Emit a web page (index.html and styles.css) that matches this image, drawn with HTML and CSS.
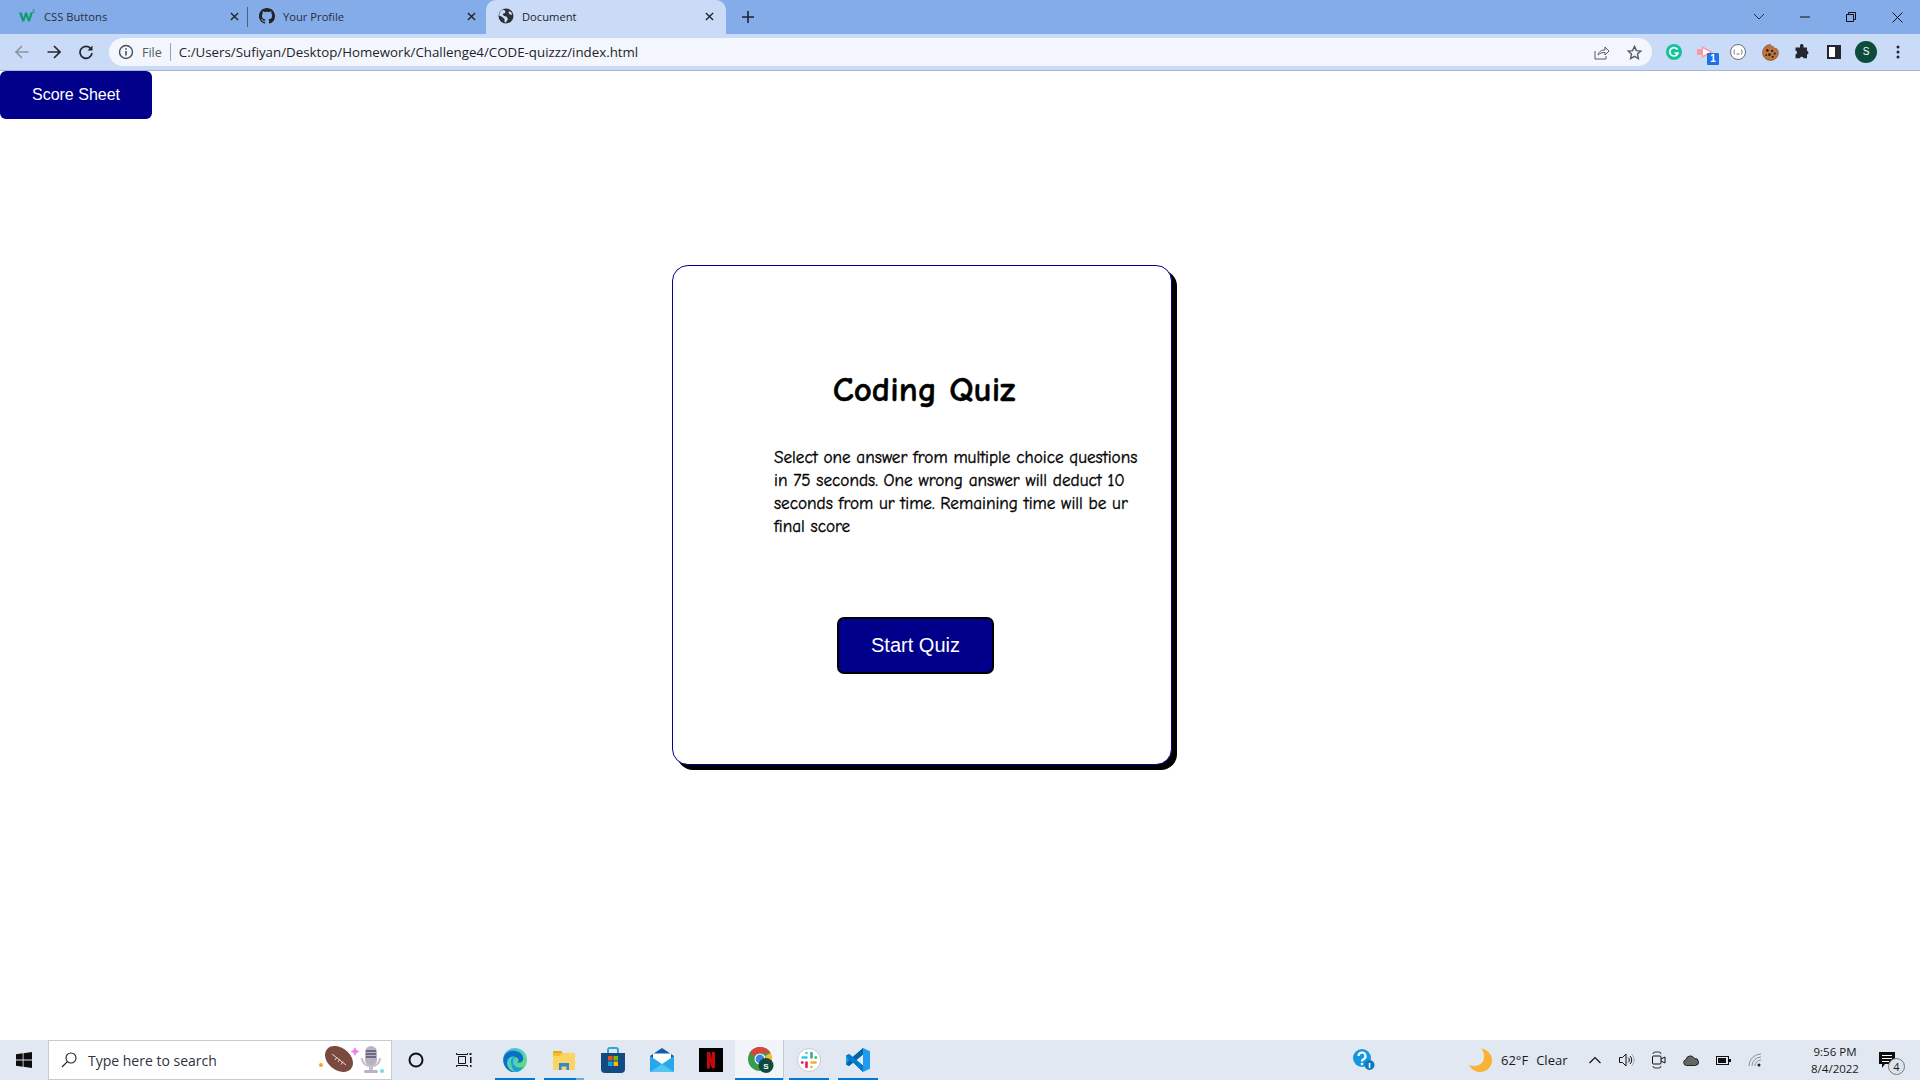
FILE: index.html
```html
<!DOCTYPE html>
<html lang="en">
<head>
<meta charset="utf-8">
<title>Document</title>
<link rel="stylesheet" href="styles.css">
</head>
<body>
<header class="browser">
  <div class="tabstrip">
    <div class="tab tab-first">
      <svg class="favicon" viewBox="0 0 16 16"><path d="M0 4.500h2.800l1.500 5.500 1.800-5.500h2l1.800 5.500 1.400-5.500h2.500L11 13.500H9L7.100 8.300 5.200 13.500H3.200z" fill="#0c9f6c"/><path d="M13.200 1.500h2.300v.6l-.9.8c.7.200.9.600.9 1 0 .7-.6 1-1.300 1l-1-.2v-.6l.9.200c.4 0 .6-.1.600-.4s-.3-.4-.9-.4v-.5l.9-.8h-1.500z" fill="#0c9f6c"/></svg>
      <span class="tab-title">CSS Buttons</span>
      <svg class="tab-close" viewBox="0 0 10 10"><path d="M1 1l8 8M9 1l-8 8" stroke="#222" stroke-width="1.500" fill="none"/></svg>
    </div>
    <div class="tab tab-second">
      <svg class="favicon" viewBox="0 0 16 16"><path fill="#222" d="M8 0C3.580 0 0 3.580 0 8c0 3.540 2.290 6.530 5.470 7.590.4.070.55-.17.55-.38 0-.19-.01-.82-.01-1.490-2.010.37-2.530-.49-2.690-.94-.09-.23-.48-.94-.82-1.130-.28-.15-.68-.52-.01-.53.63-.01 1.080.58 1.230.82.72 1.210 1.870.87 2.330.66.07-.52.28-.87.51-1.070-1.780-.2-3.640-.89-3.640-3.950 0-.87.31-1.590.82-2.150-.08-.2-.36-1.020.08-2.120 0 0 .67-.21 2.200.82.64-.18 1.320-.27 2-.27s1.360.09 2 .27c1.530-1.040 2.200-.82 2.200-.82.44 1.100.16 1.920.08 2.120.51.56.82 1.270.82 2.150 0 3.070-1.870 3.750-3.650 3.950.29.25.54.73.54 1.480 0 1.070-.01 1.930-.01 2.200 0 .21.15.46.55.38A8.010 8.010 0 0 0 16 8c0-4.420-3.580-8-8-8z"/></svg>
      <span class="tab-title">Your Profile</span>
      <svg class="tab-close" viewBox="0 0 10 10"><path d="M1 1l8 8M9 1l-8 8" stroke="#222" stroke-width="1.500" fill="none"/></svg>
    </div>
    <div class="tab tab-active">
      <svg class="favicon" viewBox="0 0 16 16"><circle cx="8" cy="8" r="7.500" fill="#2b2f36"/><path d="M5 1.500l2.500 1.500-.5 2-2.500 1L6 8l2.500.5L10 11l-2 3.500-1.500-.5V11L3.500 8.500 1 7.500C1.500 4 3 2.500 5 1.500zM11 3l2.500 1.500L14 7l-2-.5L10.500 5z" fill="#cbdcf6"/></svg>
      <span class="tab-title">Document</span>
      <svg class="tab-close" viewBox="0 0 10 10"><path d="M1 1l8 8M9 1l-8 8" stroke="#222" stroke-width="1.500" fill="none"/></svg>
    </div>
    <svg class="newtab" viewBox="0 0 12 12"><path d="M6 0v12M0 6h12" stroke="#1f2329" stroke-width="1.600" fill="none"/></svg>
    <div class="winctl">
      <div class="winbtn"><svg width="12" height="8" viewBox="0 0 12 8"><path d="M1 1l5 5 5-5" stroke="#2a2f38" fill="none"/></svg></div>
      <div class="winbtn"><svg width="10" height="2" viewBox="0 0 10 2"><path d="M0 1h10" stroke="#111"/></svg></div>
      <div class="winbtn"><svg width="10" height="10" viewBox="0 0 10 10"><path d="M.5 2.500h7v7h-7zM2.500 2.500v-2h7v7h-2" stroke="#111" fill="none"/></svg></div>
      <div class="winbtn"><svg width="11" height="11" viewBox="0 0 11 11"><path d="M.5.5l10 10M10.500.5l-10 10" stroke="#111" fill="none"/></svg></div>
    </div>
  </div>
  <div class="toolbar">
    <div class="navbtn"><svg width="16" height="16" viewBox="0 0 16 16"><path d="M14.500 8H2M8 2L2 8l6 6" stroke="#8a95a5" stroke-width="1.700" fill="none"/></svg></div>
    <div class="navbtn"><svg width="16" height="16" viewBox="0 0 16 16"><path d="M1.500 8H14M8 2l6 6-6 6" stroke="#24282e" stroke-width="1.700" fill="none"/></svg></div>
    <div class="navbtn"><svg width="16" height="16" viewBox="0 0 16 16"><path d="M13 5A6 6 0 1 0 14 9" stroke="#24282e" stroke-width="1.700" fill="none"/><path d="M14.500 1.500v5h-5z" fill="#24282e"/></svg></div>
    <div class="omnibox">
      <svg class="info" viewBox="0 0 16 16"><circle cx="8" cy="8" r="6.500" stroke="#4a4f57" stroke-width="1.400" fill="none"/><path d="M8 7v4.500M8 4.300v1.500" stroke="#4a4f57" stroke-width="1.600"/></svg>
      <span class="scheme">File</span>
      <span class="omni-sep"></span>
      <span class="url">C:/Users/Sufiyan/Desktop/Homework/Challenge4/CODE-quizzz/index.html</span>
      <div class="omni-actions">
        <div class="omni-btn"><svg width="16" height="16" viewBox="0 0 16 16"><path d="M1 7v8h11v-3" stroke="#555b63" fill="none"/><path d="M4 11c1-4 4-5 7-5V3l4 4-4 4V8.500c-3 0-5 .5-7 2.500z" stroke="#555b63" fill="none"/></svg></div>
        <div class="omni-btn"><svg width="15" height="15" viewBox="0 0 16 16"><path d="M8 1.500l2 4.500 4.800.5-3.600 3.200 1 4.800L8 12.100 3.800 14.500l1-4.800L1.200 6.500 6 6z" stroke="#555b63" stroke-width="1.500" fill="none"/></svg></div>
      </div>
    </div>
    <div class="extensions">
      <div class="ext"><svg width="16" height="16" viewBox="0 0 16 16"><circle cx="8" cy="8" r="8" fill="#15c39a"/><path d="M11.500 5.500A4.200 4.200 0 1 0 12 9H8.500" stroke="#fff" stroke-width="1.600" fill="none"/></svg></div>
      <div class="ext ext-badged"><svg width="22" height="22" viewBox="0 0 22 22"><path d="M2 8h5V5l11 6-11 6v-3H2z" fill="#fb9aa5"/><path d="M8 7.500l7 3.500-7 3.500z" fill="#fff"/></svg><span class="badge">1</span></div>
      <div class="ext"><svg width="16" height="16" viewBox="0 0 16 16"><circle cx="8" cy="8" r="7.500" fill="#fff" stroke="#6b6f75"/><path d="M5 5.500c-1 0-.7 2.500-1.300 2.500.6 0 .3 2.500 1.300 2.500M11 5.500c1 0 .7 2.500 1.300 2.500-.6 0-.3 2.500-1.300 2.500M6.500 10h3" stroke="#555" fill="none" stroke-width=".8"/></svg></div>
      <div class="ext"><svg width="17" height="17" viewBox="0 0 16 16"><path d="M8 .5c.3 1.500 1.500 2 2.500 1.800.3 1.300 1.500 2 3 1.700.3.600 2 2 2 4a7.500 7.500 0 1 1-7.500-7.500z" fill="#b9743f" stroke="#6e3f1f" stroke-width=".5"/><circle cx="5" cy="6" r="1.200" fill="#33190a"/><circle cx="9.500" cy="6.500" r="1" fill="#33190a"/><circle cx="12" cy="9" r="1" fill="#33190a"/><circle cx="7" cy="10" r="1.200" fill="#33190a"/><circle cx="10" cy="12" r="1" fill="#33190a"/><circle cx="4" cy="10.500" r=".8" fill="#33190a"/></svg></div>
      <div class="ext"><svg width="16" height="16" viewBox="0 0 16 16"><path d="M6 1.500a1.800 1.800 0 0 1 3.500 0V3.500h3.500v3.300a1.900 1.900 0 0 1 0 3.700v3.700H9.500a1.800 1.800 0 0 0-3.500 0H1.500v-3.800a2 2 0 0 0 0-3.900V3.500H6z" fill="#24282e" stroke-linejoin="round"/></svg></div>
      <div class="ext"><svg width="14" height="14" viewBox="0 0 14 14"><rect width="14" height="14" fill="#24282e"/><rect x="2" y="2" width="6" height="10" fill="#fff"/></svg></div>
      <div class="ext"><span class="avatar">S</span></div>
      <div class="ext"><svg width="4" height="14" viewBox="0 0 4 14"><circle cx="2" cy="2" r="1.500" fill="#24282e"/><circle cx="2" cy="7" r="1.500" fill="#24282e"/><circle cx="2" cy="12" r="1.500" fill="#24282e"/></svg></div>
    </div>
  </div>
</header>

<main class="viewport">
  <button class="score-btn">Score Sheet</button>
  <section class="card">
    <h1 class="card-title">Coding Quiz</h1>
    <p class="card-text">Select one answer from multiple choice questions in 75 seconds. One wrong answer will deduct 10 seconds from ur time. Remaining time will be ur final score</p>
    <button class="start-btn">Start Quiz</button>
  </section>
</main>

<footer class="taskbar">
  <div class="start"><svg width="16" height="16" viewBox="0 0 16 16"><path d="M0 2.300l6.700-1v6.300H0zM7.500 1.200L16 0v7.600H7.500zM0 8.400h6.700v6.300l-6.700-1zM7.500 8.400H16V16l-8.500-1.200z" fill="#0d0d0d"/></svg></div>
  <div class="search">
    <svg class="search-icon" width="16" height="16" viewBox="0 0 16 16"><circle cx="10" cy="6" r="5" stroke="#222" stroke-width="1.100" fill="none"/><path d="M6.400 9.600L1 15" stroke="#222" stroke-width="1.200"/></svg>
    <span class="search-text">Type here to search</span>
    <svg class="search-art" width="66" height="30" viewBox="0 0 66 30"><circle cx="3" cy="20" r="2" fill="#f5a623"/><ellipse cx="21" cy="14" rx="15.500" ry="11" transform="rotate(38 21 14)" fill="#7a4a3f"/><path d="M14 9l14 11" stroke="#e6d9d2" stroke-width="1" fill="none"/><path d="M17 15l2-3M20 17l2-3M23 19.500l2-3" stroke="#e6d9d2" stroke-width="1" fill="none"/><path d="M37 2l1.500 3 3 1.500-3 1.500-1.500 3-1.500-3-3-1.500 3-1.500z" fill="#ea7ff0"/><rect x="47" y="1" width="12" height="20" rx="6" fill="#b8b2c4"/><path d="M48 6h10M48 9h10M48 12h10" stroke="#57506b" stroke-width="1.300"/><path d="M44 13c0 11 18 11 18 0" stroke="#c4bfcd" stroke-width="2" fill="none"/><rect x="51" y="21" width="4" height="5" fill="#c4bfcd"/><rect x="46" y="25" width="14" height="3" rx="1.500" fill="#b8b2c4"/><circle cx="64" cy="26" r="2" fill="#6fdde8"/></svg>
  </div>
  <div class="sys-btn"><svg width="16" height="16" viewBox="0 0 16 16"><circle cx="8" cy="8" r="6.500" stroke="#111" stroke-width="2" fill="none"/></svg></div>
  <div class="sys-btn"><svg width="16" height="16" viewBox="0 0 16 16"><path d="M.5 1v1.500h11V1M.5 15v-1.500h11V15M2.500 4.500h7v7h-7z" stroke="#111" fill="none"/><rect x="13.500" y="1" width="2" height="2" fill="#111"/><rect x="14" y="5" width="1.500" height="6" fill="#111"/><rect x="14" y="13" width="1.500" height="2" fill="#111"/></svg></div>

  <div class="apps">
    <div class="app app-open"><svg width="24" height="24" viewBox="0 0 24 24"><defs><linearGradient id="eg" x1="0" y1="0" x2="1" y2="1"><stop offset="0" stop-color="#35c1f1"/><stop offset="1" stop-color="#6fe06b"/></linearGradient></defs><circle cx="12" cy="12" r="12" fill="url(#eg)"/><path d="M.5 10C2 4 8 2 13 3c5 1 8 5 7 9-.5 2-3 3-6 2.500 2-1 2-3 .5-4.500C11 7 4 8 4 15c0 4 3 8 8 9C5 24.500-.5 18 .5 10z" fill="#0b6fc4"/><path d="M8 13c0-3 3-4.500 5.500-3.500C9.500 10 9 15 12 18c1.500 1.500 5 2 8.500 1-2 3-5 5-8 5-3-2-4.500-6-4.500-11z" fill="#1b9de2"/></svg></div>
    <div class="app app-open app-stacked"><svg width="22" height="20" viewBox="0 0 22 20"><path d="M0 2a1 1 0 0 1 1-1h7l2 2H0z" fill="#e8a90c"/><rect y="3" width="22" height="17" rx="1" fill="#fcd462"/><path d="M0 3h9l-2 3H0z" fill="#f3bc32"/><path d="M6 13h10v7h-2.500v-3.500h-5V20H6z" fill="#2a8ad4"/></svg></div>
    <div class="app"><svg width="24" height="26" viewBox="0 0 24 26"><path d="M7 6V3a2 2 0 0 1 2-2h6a2 2 0 0 1 2 2v3" stroke="#2fa5e0" stroke-width="2" fill="none"/><path d="M0 6h24v16a4 4 0 0 1-4 4H4a4 4 0 0 1-4-4z" fill="#124a82"/><rect x="7" y="9" width="4.500" height="4.500" fill="#f25022"/><rect x="12.500" y="9" width="4.500" height="4.500" fill="#7fba00"/><rect x="7" y="14.500" width="4.500" height="4.500" fill="#00a4ef"/><rect x="12.500" y="14.500" width="4.500" height="4.500" fill="#ffb900"/></svg></div>
    <div class="app"><svg width="24" height="24" viewBox="0 0 24 24"><path d="M0 8L12 0l12 8v16H0z" fill="#0f5fa8"/><path d="M3 5.500h18V13l-9 5-9-5z" fill="#fff"/><path d="M0 8l12 8 12-8v16H0z" fill="#28a8ea"/><path d="M0 24l12-8 12 8z" fill="#50c4f3"/></svg></div>
    <div class="app"><svg width="24" height="24" viewBox="0 0 24 24"><rect width="24" height="24" fill="#000"/><path d="M8 4h3l5 16-3 .3L8 6zM8 4h3v16.300l-3 .4zM13 4h3v16h-3z" fill="#c8060f"/></svg></div>
    <div class="app app-open app-current"><svg class="chrome-icon" width="26" height="26" viewBox="0 0 26 26"><circle cx="12" cy="12" r="12" fill="#3a9b4b"/><path d="M1.600 6A12 12 0 0 1 22.400 6H12a6 6 0 0 0-5.200 3z" fill="#dc4437"/><path d="M22.400 6A12 12 0 0 1 12 24l5.200-9A6 6 0 0 0 17.200 9z" fill="#f5c02c"/><circle cx="12" cy="12" r="5.500" fill="#fff"/><circle cx="12" cy="12" r="4.400" fill="#3f83ea"/><circle cx="18" cy="18.500" r="7.500" fill="#0d4c3a"/><text class="chrome-s" x="18" y="21.500" text-anchor="middle">S</text></svg></div>
    <div class="app app-open"><svg width="24" height="24" viewBox="0 0 24 24"><circle cx="12" cy="12" r="11.500" fill="#fff" stroke="#c6c9cd"/><g stroke-width="2.600" stroke-linecap="round" fill="none"><path d="M9.500 5v.01M9.500 9.500H5.500" stroke="#36c5f0"/><path d="M14.500 5v4.500M19 9.500h-.5" stroke="#2eb67d"/><path d="M14.500 19v-.01M14.500 14.500h4" stroke="#ecb22e"/><path d="M9.500 19v-4.500M5 14.500h.5" stroke="#e01e5a"/></g></svg></div>
    <div class="app app-open"><svg width="24" height="24" viewBox="0 0 24 24"><path d="M17 0l7 3.200v17.600L17 24 7.500 14.500 3 18 0 16.500V7.500L3 6l4.500 3.500z" fill="#1f9cf0"/><path d="M17 6.500L10.500 12l6.500 5.500zM3 9v6l3-3z" fill="#e6ebf3"/><path d="M17 0L3 12l-3 4.500L3 18 17 6.500z" fill="#0065a9"/><path d="M3 6L0 7.500l3 4.500 4 2.500 10 9.500v-6.500z" fill="#007acc"/></svg></div>
  </div>

  <div class="tray">
    <div class="tray-help"><svg width="22" height="22" viewBox="0 0 22 22"><circle cx="9" cy="9" r="9" fill="#1297e0"/><path d="M5.500 7a3.500 3.500 0 1 1 5 3.200c-1 .5-1.500 1-1.500 2.300" stroke="#fff" stroke-width="2.200" fill="none"/><circle cx="9" cy="15" r="1.300" fill="#fff"/><circle cx="16.500" cy="16" r="5" fill="#0f7cc0"/><rect x="15.800" y="14" width="1.500" height="5" fill="#fff"/></svg></div>
    <div class="weather">
      <svg width="24" height="24" viewBox="0 0 24 24"><path d="M12 0c7 2 12 7 11 14-1 6-6 10-12 10-5 0-9-3-11-7 8 3 15-1 15-8 0-4-1-7-3-9z" fill="#f9b233"/></svg>
      <span class="weather-temp">62°F</span>
      <span class="weather-cond">Clear</span>
    </div>
    <div class="tray-icon"><svg width="12" height="8" viewBox="0 0 12 8"><path d="M.5 7L6 1.500 11.500 7" stroke="#111" stroke-width="1.200" fill="none"/></svg></div>
    <div class="tray-icon"><svg width="16" height="14" viewBox="0 0 16 14"><path d="M.5 4.500h3L7 1v12L3.500 9.500h-3z" stroke="#111" fill="none"/><path d="M9 4.500a3 3 0 0 1 0 5M11 3a5.500 5.500 0 0 1 0 8" stroke="#111" fill="none"/><path d="M13 1.500a8 8 0 0 1 0 11" stroke="#aaa" fill="none"/></svg></div>
    <div class="tray-icon"><svg width="14" height="18" viewBox="0 0 14 18"><path d="M1 3a2 2 0 0 1 2-2h4a2 2 0 0 1 2 2M1 15a2 2 0 0 0 2 2h4a2 2 0 0 0 2-2" stroke="#333" fill="none"/><rect x=".5" y="5" width="8.500" height="8" rx="1" stroke="#111" fill="none"/><path d="M9 8l4-2v6l-4-2" stroke="#111" fill="none"/></svg></div>
    <div class="tray-icon"><svg width="16" height="11" viewBox="0 0 16 11"><path d="M3.500 10.500A3 3 0 0 1 3 4.600 4.500 4.500 0 0 1 11.500 3.500 3.500 3.500 0 0 1 12.500 10.500z" fill="#666" stroke="#222"/></svg></div>
    <div class="tray-icon"><svg width="15" height="9" viewBox="0 0 15 9"><rect x=".5" y=".5" width="12" height="8" stroke="#111" fill="none"/><rect x="2" y="2" width="8" height="5" fill="#111"/><rect x="13" y="3" width="2" height="3" fill="#111"/></svg></div>
    <div class="tray-icon"><svg width="14" height="14" viewBox="0 0 14 14"><path d="M1 13A12 12 0 0 1 13 1M4 13A9 9 0 0 1 13 4M7 13a6 6 0 0 1 6-6" stroke="#8a8f96" fill="none"/><circle cx="11" cy="12" r="1.500" fill="#222"/></svg></div>
    <div class="clock"><span>9:56 PM</span><span>8/4/2022</span></div>
    <div class="notify"><svg width="16" height="16" viewBox="0 0 16 16"><path d="M0 0h16v12H6l-3 4v-4H0z" fill="#0d0d0d"/><path d="M3 3.500h10M3 6.500h10M3 9.500h7" stroke="#fff"/></svg><span class="notify-count">4</span></div>
  </div>
</footer>
</body>
</html>
```
FILE: styles.css
```css
* { box-sizing: border-box; }
html, body { margin: 0; padding: 0; }
body {
  width: 1920px;
  height: 1080px;
  display: flex;
  flex-direction: column;
  overflow: hidden;
  background: #fff;
  font-family: "Liberation Sans", Arial, sans-serif;
}

/* browser chrome */
.browser { height: 71px; flex: none; border-bottom: 1px solid #aab6cd; background: #c9dbf6; }
.tabstrip { height: 34px; display: flex; align-items: center; padding-left: 8px; background: #84ace9; }
.tab {
  width: 239px;
  height: 34px;
  display: flex;
  align-items: center;
  padding: 0 11px 2px 12px;
  font-family: "Open Sans", sans-serif;
  font-size: 11.2px;
  color: #2a2f38;
}
.tab-first { width: 240px; padding-left: 11px; padding-right: 8px; position: relative; }
.tab-first::after {
  content: "";
  position: absolute;
  right: 0;
  top: 7px;
  width: 1px;
  height: 20px;
  background: #4f5e78;
}
.tab-second { width: 238px; padding-left: 11px; padding-right: 9px; }
.tab-active { width: 240px; background: #c9dbf6; border-radius: 10px 10px 0 0; color: #1f2329; }
.favicon { width: 16px; height: 16px; flex: none; }
.tab-first .favicon { margin-right: 9px; }
.tab-title { flex: 1; padding-left: 8px; white-space: nowrap; }
.tab-first .tab-title { padding-left: 0; }
.tab-close { width: 9px; height: 9px; flex: none; margin-right: 1px; }
.newtab { width: 12px; height: 12px; margin-left: 16px; }
.winctl { display: flex; margin-left: auto; }
.winbtn { width: 46px; height: 34px; display: flex; align-items: center; justify-content: center; }

.toolbar { height: 36px; display: flex; align-items: center; padding-left: 6px; }
.navbtn { width: 32px; height: 32px; display: flex; align-items: center; justify-content: center; }
.omnibox {
  width: 1543px;
  height: 28px;
  margin-left: 7px;
  display: flex;
  align-items: center;
  padding: 0 2px 0 9px;
  background: #f3f7fd;
  border-radius: 14px;
  font-family: "Open Sans", sans-serif;
  font-size: 13.3px;
}
.info { width: 16px; height: 16px; flex: none; }
.scheme { margin-left: 8px; font-size: 12.5px; color: #555b63; }
.omni-sep { width: 1px; height: 18px; margin: 0 8px; background: #9aa0a8; }
.url { color: #1f2329; white-space: nowrap; }
.omni-actions { display: flex; margin-left: auto; }
.omni-btn { width: 32px; height: 28px; display: flex; align-items: center; justify-content: center; }
.extensions { display: flex; margin-left: 6px; }
.ext { position: relative; width: 32px; height: 32px; display: flex; align-items: center; justify-content: center; }
.badge {
  position: absolute;
  right: 3px;
  bottom: 3px;
  width: 12px;
  height: 12px;
  background: #1a73e8;
  border-radius: 1px;
  color: #fff;
  font-size: 10px;
  font-weight: 700;
  line-height: 12px;
  text-align: center;
}
.avatar {
  width: 22px;
  height: 22px;
  border-radius: 50%;
  background: #0d4c3a;
  color: #fff;
  font-size: 10px;
  line-height: 22px;
  text-align: center;
}

/* page */
.viewport { flex: 1; min-height: 0; }
.score-btn {
  display: block;
  width: 152px;
  height: 48px;
  padding: 0;
  border: 0;
  border-radius: 6px;
  background: #00008b;
  color: #fff;
  font-family: "Liberation Sans", Arial, sans-serif;
  font-size: 16px;
}
.card {
  width: 500px;
  height: 500px;
  margin: 146px 0 0 672px;
  padding-top: 101px;
  border: 1px solid #00008b;
  border-radius: 16px;
  box-shadow: 5px 5px 0 #000;
  background: #fff;
  font-family: "Comic Sans MS", "Comic Neue", "Lato", sans-serif;
  color: #000;
}
.card-title {
  margin: 0;
  padding-left: 4px;
  font-size: 35px;
  line-height: 46px;
  font-weight: 700;
  text-align: center;
  -webkit-text-stroke: 0.4px #000;
}
.card-text {
  width: 382px;
  margin: 33px 0 0 101px;
  font-size: 17.2px;
  line-height: 23px;
  -webkit-text-stroke: 0.35px #000;
}
.start-btn {
  display: block;
  width: 157px;
  height: 57px;
  margin: 79px 0 0 164px;
  padding: 0;
  border: 2px solid #000;
  border-radius: 7px;
  background: #00008b;
  color: #fff;
  font-family: "Liberation Sans", Arial, sans-serif;
  font-size: 20px;
}

/* taskbar */
.taskbar {
  height: 40px;
  flex: none;
  display: flex;
  align-items: stretch;
  background: #e1e8f2;
}
.start { width: 48px; display: flex; align-items: center; justify-content: center; }
.search {
  width: 344px;
  display: flex;
  align-items: center;
  padding-left: 12px;
  border: 1px solid #c8ccd2;
  background: #fff;
  font-family: "Open Sans", sans-serif;
}
.search-icon { flex: none; }
.search-text { margin-left: 11px; font-size: 14px; color: #2c3440; white-space: nowrap; }
.search-art { margin-left: auto; margin-right: 7px; }
.sys-btn { width: 48px; display: flex; align-items: center; justify-content: center; }
.apps { display: flex; margin-left: 2px; }
.app { position: relative; width: 49px; display: flex; align-items: center; justify-content: center; }
.app-open::after {
  content: "";
  position: absolute;
  left: 5px;
  right: 4px;
  bottom: 0;
  height: 2px;
  background: #0078d7;
}
.app-stacked::after { background: linear-gradient(to right, #0078d7 80%, #66aee8 80%); }
.app-current { background: #f1f5fa; border-right: 1px solid #c2c8d0; }
.app-current::after { left: 0; right: 0; }
.chrome-icon { margin-left: 4px; }
.chrome-s { fill: #fff; font-family: "Liberation Sans", sans-serif; font-size: 8px; font-weight: 700; }

.tray {
  display: flex;
  align-items: center;
  margin-left: auto;
  padding-right: 9px;
  height: 40px;
  font-family: "Open Sans", sans-serif;
  color: #1a1a1a;
}
.tray-help { width: 32px; margin-left: 2px; display: flex; justify-content: center; }
.weather { width: 113px; margin-left: 86px; padding-left: 3px; display: flex; align-items: center; font-size: 13px; }
.weather-temp { margin-left: 8px; }
.weather-cond { margin-left: 8px; }
.tray-icon { width: 32px; display: flex; align-items: center; justify-content: center; }
.clock {
  width: 56px;
  margin-left: 36px;
  display: flex;
  flex-direction: column;
  align-items: center;
  font-size: 11.5px;
  line-height: 17px;
  white-space: nowrap;
}
.notify { position: relative; width: 48px; display: flex; justify-content: center; }
.notify-count {
  position: absolute;
  left: 25px;
  top: 6px;
  width: 17px;
  height: 17px;
  border: 1px solid #777;
  border-radius: 50%;
  background: #dde3ec;
  font-size: 11px;
  line-height: 15px;
  text-align: center;
}
```
